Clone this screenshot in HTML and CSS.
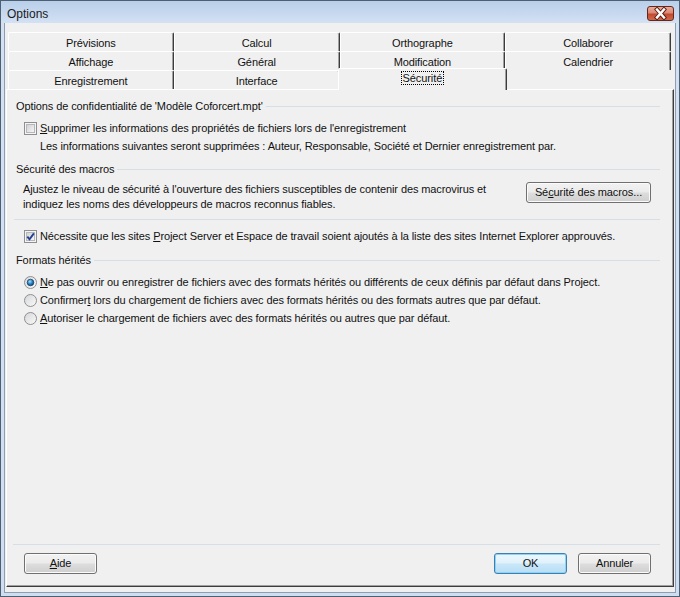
FILE: index.html
```html
<!DOCTYPE html>
<html lang="fr">
<head>
<meta charset="utf-8">
<title>Options</title>
<link rel="stylesheet" href="styles.css">
</head>
<body>
<div class="window">
  <div class="titlebar">
    <span class="title">Options</span>
    <div class="close">
      <svg width="25" height="13" viewBox="0 0 25 13">
        <path d="M9 2.5 L16 10.5 M16 2.5 L9 10.5" stroke="#5b1a10" stroke-width="4.2" stroke-linecap="square" fill="none"/>
        <path d="M9 2.5 L16 10.5 M16 2.5 L9 10.5" stroke="#ffffff" stroke-width="2.4" stroke-linecap="square" fill="none"/>
      </svg>
    </div>
  </div>
  <div class="client">
    <div class="tabs">
      <div class="tab-row">
        <div class="tab">Prévisions</div>
        <div class="tab">Calcul</div>
        <div class="tab">Orthographe</div>
        <div class="tab">Collaborer</div>
      </div>
      <div class="tab-row">
        <div class="tab">Affichage</div>
        <div class="tab">Général</div>
        <div class="tab">Modification</div>
        <div class="tab">Calendrier</div>
      </div>
      <div class="tab-row">
        <div class="tab">Enregistrement</div>
        <div class="tab">Interface</div>
        <div class="tab selected"><span class="focus">Sécurité</span></div>
        <div class="tab-empty"></div>
      </div>
    </div>
    <div class="panel">
      <div class="content">
        <div class="group-header gh1"><span>Options de confidentialité de 'Modèle Coforcert.mpt'</span><i class="rule"></i></div>
        <div class="opt opt1">
          <svg class="box" width="13" height="13" viewBox="0 0 13 13">
            <defs><linearGradient id="cbg" x1="0" y1="0" x2="1" y2="1"><stop offset="0" stop-color="#cfd0d2"/><stop offset="1" stop-color="#f7f7f7"/></linearGradient></defs>
            <rect x="0.5" y="0.5" width="12" height="12" fill="#f4f4f4" stroke="#8f8f8f"/>
            <rect x="2.5" y="2.5" width="8" height="8" fill="url(#cbg)" stroke="#b4b7bb"/>
          </svg>
          <span class="lbl"><u>S</u>upprimer les informations des propriétés de fichiers lors de l'enregistrement</span>
        </div>
        <div class="info">Les informations suivantes seront supprimées : Auteur, Responsable, Société et Dernier enregistrement par.</div>
        <div class="group-header gh2"><span>Sécurité des macros</span><i class="rule"></i></div>
        <div class="macro">
          <p class="macro-text">Ajustez le niveau de sécurité à l'ouverture des fichiers susceptibles de contenir des macrovirus et<br>indiquez les noms des développeurs de macros reconnus fiables.</p>
          <div class="btn macro-btn">Sé<u>c</u>urité des macros...</div>
        </div>
        <div class="sep"></div>
        <div class="opt opt2">
          <svg class="box" width="13" height="13" viewBox="0 0 13 13">
            <defs><linearGradient id="cbg2" x1="0" y1="0" x2="1" y2="1"><stop offset="0" stop-color="#cfd0d2"/><stop offset="1" stop-color="#f7f7f7"/></linearGradient></defs>
            <rect x="0.5" y="0.5" width="12" height="12" fill="#f4f4f4" stroke="#8f8f8f"/>
            <rect x="2.5" y="2.5" width="8" height="8" fill="url(#cbg2)" stroke="#b4b7bb"/>
            <path d="M3.3 6.6 L5.5 9.2 L9.9 3.4" stroke="#233f92" stroke-width="1.9" fill="none"/>
          </svg>
          <span class="lbl">Nécessite que les sites <u>P</u>roject Server et Espace de travail soient ajoutés à la liste des sites Internet Explorer approuvés.</span>
        </div>
        <div class="group-header gh3"><span>Formats hérités</span><i class="rule"></i></div>
        <div class="radios">
          <div class="opt radio-row">
            <svg class="box" width="13" height="13" viewBox="0 0 13 13">
              <defs>
                <linearGradient id="rbg" x1="0" y1="0" x2="1" y2="1"><stop offset="0" stop-color="#d4d5d7"/><stop offset="1" stop-color="#fbfbfb"/></linearGradient>
                <radialGradient id="rdot" cx="0.4" cy="0.35" r="0.7"><stop offset="0" stop-color="#a6e1fb"/><stop offset="0.5" stop-color="#2d86c7"/><stop offset="1" stop-color="#0b3f73"/></radialGradient>
              </defs>
              <circle cx="6.5" cy="6.5" r="6" fill="url(#rbg)" stroke="#8f8f8f"/>
              <circle cx="6.5" cy="6.5" r="3.3" fill="url(#rdot)" stroke="#0e355e" stroke-width="0.7"/>
            </svg>
            <span class="lbl"><u>N</u>e pas ouvrir ou enregistrer de fichiers avec des formats hérités ou différents de ceux définis par défaut dans Project.</span>
          </div>
          <div class="opt radio-row">
            <svg class="box" width="13" height="13" viewBox="0 0 13 13">
              <defs><linearGradient id="rbg2" x1="0" y1="0" x2="1" y2="1"><stop offset="0" stop-color="#d4d5d7"/><stop offset="1" stop-color="#fbfbfb"/></linearGradient></defs>
              <circle cx="6.5" cy="6.5" r="6" fill="url(#rbg2)" stroke="#8f8f8f"/>
            </svg>
            <span class="lbl">Confirmer<u>t</u> lors du chargement de fichiers avec des formats hérités ou des formats autres que par défaut.</span>
          </div>
          <div class="opt radio-row">
            <svg class="box" width="13" height="13" viewBox="0 0 13 13">
              <defs><linearGradient id="rbg3" x1="0" y1="0" x2="1" y2="1"><stop offset="0" stop-color="#d4d5d7"/><stop offset="1" stop-color="#fbfbfb"/></linearGradient></defs>
              <circle cx="6.5" cy="6.5" r="6" fill="url(#rbg3)" stroke="#8f8f8f"/>
            </svg>
            <span class="lbl"><u>A</u>utoriser le chargement de fichiers avec des formats hérités ou autres que par défaut.</span>
          </div>
        </div>
      </div>
      <div class="footer">
        <div class="sep footer-sep"></div>
        <div class="buttons">
          <div class="btn"><u>A</u>ide</div>
          <div class="spacer"></div>
          <div class="btn default">OK</div>
          <div class="btn">Annuler</div>
        </div>
      </div>
    </div>
  </div>
</div>
</body>
</html>
```

FILE: styles.css
```css
html, body {
  margin: 0;
  padding: 0;
  background: #ffffff;
}

.window {
  box-sizing: border-box;
  width: 680px;
  height: 597px;
  border: 1px solid #4f5f72;
  background: linear-gradient(to bottom, #b9cfea 0px, #c9daf0 14px, #d3e1f3 22px, #cfdff1 100%);
  display: flex;
  flex-direction: column;
  font-family: "Liberation Sans", Tahoma, Arial, sans-serif;
  font-size: 11px;
  letter-spacing: -0.1px;
  color: #111;
}

.titlebar {
  height: 22px;
  display: flex;
  align-items: center;
  padding: 0 5px 0 6px;
}

.title {
  font-family: "Liberation Sans", Arial, sans-serif;
  font-size: 12px;
  letter-spacing: 0;
  color: #1b1b1b;
  flex: 1;
  padding-top: 3px;
}

.close {
  width: 25px;
  height: 13px;
  border: 1px solid #6a2517;
  border-radius: 3px;
  background: linear-gradient(to bottom, #e9ab9c 0%, #d98a75 45%, #c24a2e 55%, #cf6a4d 100%);
  margin-top: 2px;
  display: flex;
}

.client {
  flex: 1;
  margin: 0 3px 3px 3px;
  border: 1px solid #8d9db2;
  border-top: none;
  background: #f0f0f0;
  padding: 9px 1px 5px 1px;
  display: flex;
  flex-direction: column;
}

.tabs {
  margin: 0 3px 0 2px;
}

.tab-row {
  display: grid;
  grid-template-columns: repeat(4, 1fr);
  height: 19px;
}

.tab {
  box-sizing: border-box;
  border-top: 1px solid #ffffff;
  border-left: 1px solid #ffffff;
  border-right: 1px solid #3c3c3c;
  box-shadow: inset -1px 0 0 #a0a0a0;
  border-radius: 2px 2px 0 0;
  background: #f0f0f0;
  text-align: center;
  line-height: 13px;
  padding-top: 4px;
}

.tab.selected {
  margin: -2px -2px -1px -2px;
  position: relative;
  z-index: 1;
  padding-top: 3px;
}

.focus {
  outline: 1px dotted #000;
  outline-offset: 0;
  padding: 0 1px;
}

.panel {
  flex: 1;
  display: flex;
  flex-direction: column;
  border-top: 1px solid #ffffff;
  border-left: 1px solid #ffffff;
  border-right: 1px solid #3c3c3c;
  border-bottom: 1px solid #3c3c3c;
  box-shadow: inset -1px -1px 0 #a0a0a0;
  padding: 0 13px 12px 9px;
}

.content {
  display: flex;
  flex-direction: column;
}

.group-header {
  display: flex;
  align-items: center;
  line-height: 13px;
  height: 13px;
}

.group-header .rule {
  flex: 1;
  height: 1px;
  background: #d5dfe5;
  margin-left: 3px;
}

.gh1 { margin-top: 10px; }
.gh2 { margin-top: 10px; }
.gh3 { margin-top: 11px; }

.opt {
  display: flex;
  align-items: center;
  height: 13px;
  line-height: 13px;
  margin-left: 8px;
  white-space: nowrap;
}

.opt .box {
  flex: none;
  display: block;
}

.opt .lbl {
  margin-left: 3px;
}

.opt1 { margin-top: 9px; }
.opt2 { margin-top: 10px; }

.info {
  margin: 5px 0 0 24px;
  line-height: 13px;
  white-space: nowrap;
}

.macro {
  display: flex;
  align-items: flex-start;
  margin-top: 6px;
  padding-right: 9px;
}

.macro-text {
  margin: 0 0 0 7px;
  flex: 1;
  line-height: 15px;
  white-space: nowrap;
}

.btn {
  box-sizing: border-box;
  width: 73px;
  height: 21px;
  border: 1px solid #707070;
  border-radius: 3px;
  background: linear-gradient(to bottom, #f2f2f2 0%, #ebebeb 48%, #dddddd 52%, #cfcfcf 100%);
  box-shadow: inset 0 0 0 1px #fbfbfb;
  text-align: center;
  line-height: 19px;
}

.macro-btn {
  width: 125px;
  margin-top: 0;
}

.btn.default {
  border-color: #3c7fb1;
  background: linear-gradient(to bottom, #ecf7fd 0%, #e0f1fb 48%, #c9e7f9 52%, #b8def6 100%);
  box-shadow: inset 0 0 0 1px #8fd2f3;
}

.sep {
  height: 1px;
  background: #d5dfe5;
  margin-left: -2px;
}

.content > .sep {
  margin-top: 7px;
}

.radios {
  margin-top: 6px;
  display: flex;
  flex-direction: column;
}

.radio-row {
  height: 18px;
  line-height: 18px;
}

.footer {
  margin-top: auto;
}

.footer-sep {
  margin-left: -3px;
  margin-bottom: 8px;
}

.buttons {
  display: flex;
  gap: 11px;
  padding: 0 9px 0 8px;
}

.spacer {
  flex: 1;
}

u {
  text-decoration: underline;
  text-underline-offset: 1px;
}
```
